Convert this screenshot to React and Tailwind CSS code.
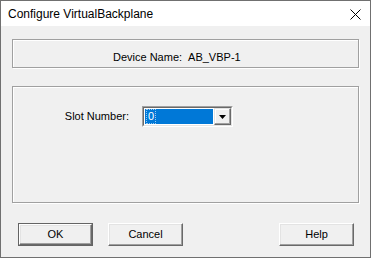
import React from "react";

const sans = { fontFamily: '"Liberation Sans", Arial, sans-serif' };

function Btn({ children, def }) {
  const inner = (
    <div className="flex h-full w-full items-center justify-center border-t border-l border-b border-r border-t-white border-l-white border-b-[#696969] border-r-[#696969] bg-[#f0f0f0] shadow-[inset_-1px_-1px_0_#a0a0a0,inset_1px_1px_0_#e3e3e3] text-[11px] text-black">
      {children}
    </div>
  );
  return def ? (
    <div className="h-[23px] w-[75px] border border-[#646464]">{inner}</div>
  ) : (
    <div className="h-[23px] w-[75px]">{inner}</div>
  );
}

export default function App() {
  return (
    <div
      className="flex h-[258px] w-[371px] flex-col border border-[#707070] bg-[#f0f0f0] text-black"
      style={sans}
    >
      <div className="flex h-[25px] shrink-0 items-center justify-between bg-white pl-[7px] pr-[9px]">
        <span className="text-[12px] leading-none">Configure VirtualBackplane</span>
        <svg width="11" height="11" viewBox="0 0 11 11" className="mt-[1px]">
          <path d="M0.5 0.5 L10.5 10.5 M10.5 0.5 L0.5 10.5" stroke="#000" strokeWidth="1" fill="none" />
        </svg>
      </div>
      <div className="flex flex-1 flex-col px-[11px]">
        <div className="mt-[13px] flex h-[29px] items-start border border-[#a0a0a0] pl-[100px] pt-[11px] text-[11px] leading-[13px] shadow-[inset_1px_1px_0_#fff,1px_1px_0_#fff]">
          <span>Device Name:</span>
          <span className="ml-[6px]">AB_VBP-1</span>
        </div>
        <div className="mt-[18px] flex h-[117px] items-start border border-[#a0a0a0] pt-[19px] shadow-[inset_1px_1px_0_#fff,1px_1px_0_#fff]">
          <div className="flex h-[21px] items-center">
            <div className="w-[116px] text-right text-[11px] leading-[13px]">Slot Number:</div>
            <div className="ml-[13px] h-[21px] w-[91px] border border-t-[#a0a0a0] border-l-[#a0a0a0] border-b-white border-r-white">
              <div className="flex h-full w-full border border-t-[#696969] border-l-[#696969] border-b-[#e3e3e3] border-r-[#e3e3e3] bg-white">
                <div className="flex flex-1 p-px">
                  <div className="flex flex-1 items-center bg-[#0078d7] pl-[2px] text-[11px] leading-[13px] text-white">
                    <span className="outline-1 outline-dotted outline-white/60 px-px">0</span>
                  </div>
                </div>
                <div className="flex h-full w-[17px] items-center justify-center border border-t-[#e3e3e3] border-l-[#e3e3e3] border-b-[#696969] border-r-[#696969] bg-[#f0f0f0] shadow-[inset_-1px_-1px_0_#a0a0a0,inset_1px_1px_0_#fff]">
                  <svg width="7" height="4" viewBox="0 0 7 4">
                    <path d="M0 0 H7 L3.5 4 Z" fill="#000" />
                  </svg>
                </div>
              </div>
            </div>
          </div>
        </div>
        <div className="mt-[20px] flex items-center pl-[6px] pr-[5px]">
          <Btn def>OK</Btn>
          <div className="ml-[15px]">
            <Btn>Cancel</Btn>
          </div>
          <div className="ml-auto">
            <Btn>Help</Btn>
          </div>
        </div>
      </div>
    </div>
  );
}
